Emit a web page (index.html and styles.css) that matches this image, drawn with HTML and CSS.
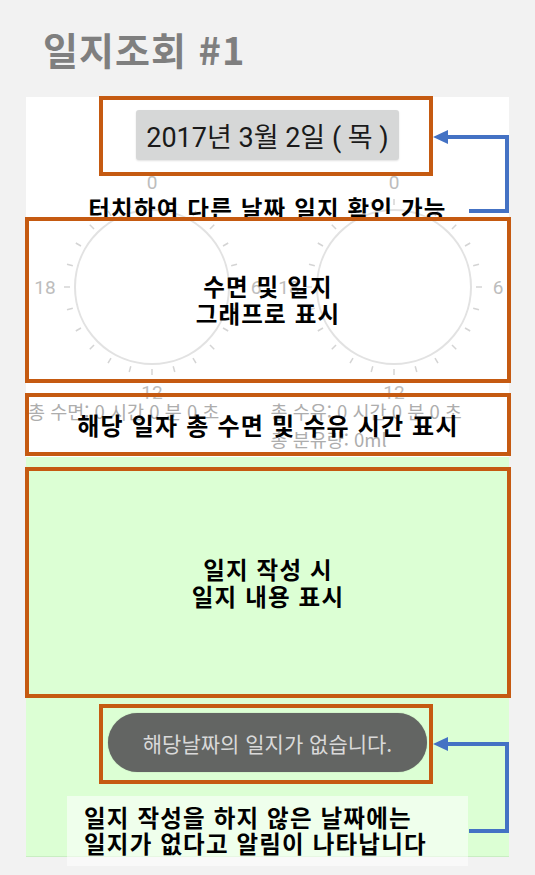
FILE: index.html
```html
<!DOCTYPE html>
<html lang="ko">

<head>
	<meta charset="UTF-8">
	<meta name="viewport" content="width=device-width, initial-scale=1.0">
	<title>일지조회 #1</title>
	<link rel="stylesheet" href="styles.css">
</head>

<body>
	<div class="page">
		<h1 class="title">일지조회 #1</h1>

		<!-- 앱 화면 -->
		<div class="panel">
			<div class="date-btn">2017년 3월 2일 ( 목 )</div>

			<svg class="clocks" width="483" height="227" viewBox="0 0 483 227">
				<defs>
					<g id="ticks">
						<line x1="0" y1="-82" x2="0" y2="-88" transform="rotate(0)" />
						<line x1="0" y1="-82" x2="0" y2="-88" transform="rotate(15)" />
						<line x1="0" y1="-82" x2="0" y2="-88" transform="rotate(30)" />
						<line x1="0" y1="-82" x2="0" y2="-88" transform="rotate(45)" />
						<line x1="0" y1="-82" x2="0" y2="-88" transform="rotate(60)" />
						<line x1="0" y1="-82" x2="0" y2="-88" transform="rotate(75)" />
						<line x1="0" y1="-82" x2="0" y2="-88" transform="rotate(90)" />
						<line x1="0" y1="-82" x2="0" y2="-88" transform="rotate(105)" />
						<line x1="0" y1="-82" x2="0" y2="-88" transform="rotate(120)" />
						<line x1="0" y1="-82" x2="0" y2="-88" transform="rotate(135)" />
						<line x1="0" y1="-82" x2="0" y2="-88" transform="rotate(150)" />
						<line x1="0" y1="-82" x2="0" y2="-88" transform="rotate(165)" />
						<line x1="0" y1="-82" x2="0" y2="-88" transform="rotate(180)" />
						<line x1="0" y1="-82" x2="0" y2="-88" transform="rotate(195)" />
						<line x1="0" y1="-82" x2="0" y2="-88" transform="rotate(210)" />
						<line x1="0" y1="-82" x2="0" y2="-88" transform="rotate(225)" />
						<line x1="0" y1="-82" x2="0" y2="-88" transform="rotate(240)" />
						<line x1="0" y1="-82" x2="0" y2="-88" transform="rotate(255)" />
						<line x1="0" y1="-82" x2="0" y2="-88" transform="rotate(270)" />
						<line x1="0" y1="-82" x2="0" y2="-88" transform="rotate(285)" />
						<line x1="0" y1="-82" x2="0" y2="-88" transform="rotate(300)" />
						<line x1="0" y1="-82" x2="0" y2="-88" transform="rotate(315)" />
						<line x1="0" y1="-82" x2="0" y2="-88" transform="rotate(330)" />
						<line x1="0" y1="-82" x2="0" y2="-88" transform="rotate(345)" />
					</g>
				</defs>
				<!-- 수면 -->
				<g transform="translate(126 117)">
					<circle class="dial" r="77" />
					<use href="#ticks" class="tick" />
				</g>
				<text class="num" x="126" y="12">0</text>
				<text class="num" x="230" y="117">6</text>
				<text class="num" x="126" y="222">12</text>
				<text class="num" x="19" y="117">18</text>
				<!-- 수유 -->
				<g transform="translate(368 117)">
					<circle class="dial" r="77" />
					<use href="#ticks" class="tick" />
				</g>
				<text class="num" x="368" y="12">0</text>
				<text class="num" x="472" y="117">6</text>
				<text class="num" x="368" y="222">12</text>
				<text class="num" x="263" y="117">18</text>
			</svg>

			<div class="stats">
				<div class="stat-col left">
					<div>총 수면: 0 시간 0 분 0 초</div>
				</div>
				<div class="stat-col right">
					<div>총 수유: 0 시간 0 분 0 초</div>
					<div>총 분유량: 0ml</div>
				</div>
			</div>

			<div class="green">
				<div class="toast">해당날짜의 일지가 없습니다.</div>
			</div>
		</div>

		<!-- 설명 -->
		<div class="touch-hint label">터치하여 다른 날짜 일지 확인 가능</div>

		<div class="box box-date"></div>
		<div class="box box-graph">
			<div class="label">수면 및 일지<br>그래프로 표시</div>
		</div>
		<div class="box box-total">
			<div class="label big">해당 일자 총 수면 및 수유 시간 표시</div>
		</div>
		<div class="box box-diary">
			<div class="label">일지 작성 시<br>일지 내용 표시</div>
		</div>
		<div class="box box-toast"></div>

		<div class="note label">일지 작성을 하지 않은 날짜에는<br>일지가 없다고 알림이 나타납니다</div>

		<svg class="arrows" width="535" height="875" viewBox="0 0 535 875">
			<polyline points="469,211 507,211 507,137 446,137" />
			<polygon points="433,137 448,130 448,144" />
			<polyline points="469,831 507,831 507,744 446,744" />
			<polygon points="433,744 448,737 448,751" />
		</svg>
	</div>
</body>

</html>
```

FILE: styles.css
```css
body {
	margin: 0;
	background-color: #f2f2f2;
	font-family: "Noto Sans CJK KR", "Noto Sans", sans-serif;
}

.page {
	position: relative;
	width: 535px;
	height: 875px;
	overflow: hidden;
}

.title {
	margin: 0;
	padding: 27px 0 0 43px;
	height: 97px;
	box-sizing: border-box;
	font-size: 38px;
	line-height: 44px;
	letter-spacing: 1px;
	font-weight: 700;
	color: #7f7f7f;
}

/* 앱 화면 */
.panel {
	display: flex;
	flex-direction: column;
	margin-left: 26px;
	width: 483px;
	height: 760px;
	background-color: #fff;
}

.date-btn {
	display: flex;
	align-items: center;
	justify-content: center;
	align-self: center;
	margin-top: 13px;
	width: 263px;
	height: 50px;
	background-color: #d6d7d7;
	border-radius: 3px;
	box-shadow: 0 1px 2px rgba(0, 0, 0, .12);
	font-family: Roboto, "Noto Sans CJK KR", sans-serif;
	font-size: 27px;
	color: #1a1a1a;
}

.clocks {
	display: block;
	margin-top: 10px;
	overflow: visible;
}

.dial {
	fill: none;
	stroke: #e2e2e2;
	stroke-width: 2;
}

.tick {
	stroke: #d4d4d4;
	stroke-width: 1.5;
}

.num {
	font-family: Roboto, sans-serif;
	font-size: 19px;
	fill: #bdbdbd;
	text-anchor: middle;
	dominant-baseline: central;
}

.stats {
	display: grid;
	grid-template-columns: 1fr 1fr;
	font-size: 18.5px;
	line-height: 28px;
	color: #adadad;
	white-space: nowrap;
}

.stat-col.left {
	padding-left: 2px;
}

.stat-col.right {
	padding-left: 3px;
}

.green {
	display: flex;
	flex-direction: column;
	align-items: center;
	flex: 1;
	margin-top: 4px;
	background-color: #dcffd4;
	border-bottom: 1px solid #c9eec2;
}

.toast {
	display: flex;
	align-items: center;
	justify-content: center;
	margin-top: 256px;
	width: 319px;
	height: 59px;
	border-radius: 30px;
	background-color: #636563;
	box-shadow: 0 0 1px rgba(0, 0, 0, .4);
	font-size: 21px;
	color: #d9d9d9;
}

/* 설명 */
.label {
	font-size: 23.5px;
	line-height: 27px;
	letter-spacing: 1.2px;
	font-weight: 700;
	color: #000;
	white-space: nowrap;
}

.label.big {
	font-size: 24px;
}

.touch-hint {
	position: absolute;
	left: 0;
	top: 193px;
	width: 535px;
	line-height: 30px;
	text-align: center;
}

.box {
	position: absolute;
	display: flex;
	align-items: center;
	justify-content: center;
	box-sizing: border-box;
	border: 4px solid #c55a11;
	text-align: center;
}

.box-date {
	left: 99px;
	top: 96px;
	width: 334px;
	height: 80px;
}

.box-graph {
	left: 25px;
	top: 217px;
	width: 486px;
	height: 166px;
}

.box-total {
	left: 25px;
	top: 393px;
	width: 486px;
	height: 63px;
}

.box-diary {
	left: 25px;
	top: 467px;
	width: 486px;
	height: 231px;
}

.box-toast {
	left: 99px;
	top: 704px;
	width: 334px;
	height: 80px;
}

.note {
	position: absolute;
	left: 67px;
	top: 796px;
	width: 401px;
	height: 70px;
	box-sizing: border-box;
	padding: 8px 0 0 17px;
	line-height: 26px;
	background-color: rgba(255, 255, 255, .55);
}

.arrows {
	position: absolute;
	left: 0;
	top: 0;
	pointer-events: none;
}

.arrows polyline {
	fill: none;
	stroke: #4472c4;
	stroke-width: 4;
}

.arrows polygon {
	fill: #4472c4;
}
```
